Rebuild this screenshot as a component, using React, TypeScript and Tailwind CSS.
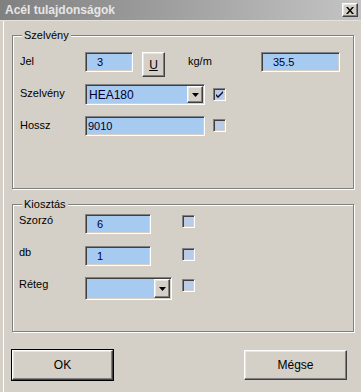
import type { JSX, ReactNode } from "react";

const sunken =
  "border border-t-[#808080] border-l-[#808080] border-b-white border-r-white shadow-[inset_1px_1px_0_#404040,inset_-1px_-1px_0_#d4d0c8]";
const raised =
  "border border-t-white border-l-white border-b-[#404040] border-r-[#404040] shadow-[inset_-1px_-1px_0_#808080,inset_1px_1px_0_#e8e6e0] bg-[#d4d0c8]";

function GroupBox({ title, className, children }: { title: string; className: string; children: ReactNode }): JSX.Element {
  return (
    <div className={`relative border border-[#808080] shadow-[inset_1px_1px_0_#fff,1px_1px_0_#fff] ${className}`}>
      <span className="absolute -top-[7px] left-[9px] bg-[#d4d0c8] px-[2px] leading-[13px]">{title}</span>
      {children}
    </div>
  );
}

function Field({ value, className }: { value?: string; className: string }): JSX.Element {
  return (
    <div className={`${sunken} bg-[#a6caf0] flex items-center pt-px text-[#000030] ${className}`}>
      {value}
    </div>
  );
}

function Combo({ value, className }: { value?: string; className: string }): JSX.Element {
  return (
    <div className={`${sunken} bg-[#a6caf0] flex items-stretch p-[1px] text-[#000030] ${className}`}>
      <span className="flex-1 flex items-center pl-[2px] pt-px text-[12px]">{value}</span>
      <span className={`${raised} w-[16px] flex items-center justify-center`}>
        <svg width="7" height="4" viewBox="0 0 7 4">
          <path d="M0 0h7L3.5 4z" fill="#000" />
        </svg>
      </span>
    </div>
  );
}

function Check({ checked, className }: { checked?: boolean; className: string }): JSX.Element {
  return (
    <div className={`${sunken} w-[13px] h-[13px] bg-[#b9cbe6] flex items-center justify-center ${className}`}>
      {checked && (
        <svg width="7" height="7" viewBox="0 0 7 7">
          <path d="M0 3l2 2 5-5v2L2 7 0 5z" fill="#0a0a3a" />
        </svg>
      )}
    </div>
  );
}

export default function App(): JSX.Element {
  return (
    <div className="w-[361px] h-[392px] overflow-hidden bg-[#d4d0c8] text-[11px] text-black font-['Liberation_Sans',Arial,sans-serif] shadow-[inset_3px_0_0_#d4d0c8,inset_4px_0_0_#fff]">
      <div className="h-[21px] flex items-center justify-between pl-[5px] pr-[3px] bg-linear-to-r from-[#808080] to-[#c4c4c4] border-b border-[#e4e2dc]">
        <span className="font-bold text-[12px] text-[#e6e6e6]">Acél tulajdonságok</span>
        <span className={`${raised} w-[16px] h-[14px] flex items-center justify-center`}>
          <svg width="8" height="7" viewBox="0 0 8 7">
            <path d="M0 0h2l2 2.5L6 0h2L5 3.5 8 7H6L4 4.5 2 7H0l3-3.5z" fill="#000" />
          </svg>
        </span>
      </div>

      <div className="px-[12px] pt-[14px]">
        <GroupBox title="Szelvény" className="w-[342px] h-[154px] pt-[15px] pl-[7px]">
          <div className="flex h-[26px]">
            <span className="w-[65px] mt-[4px] leading-[13px]">Jel</span>
            <Field value="3" className="w-[48px] h-[20px] mt-[1px] pl-[11px]" />
            <button className={`${raised} ml-[9px] w-[23px] h-[25px] mt-[1px] text-[12px] underline`}>U</button>
            <span className="ml-[23px] w-[73px] mt-[4px] leading-[13px]">kg/m</span>
            <Field value="35.5" className="w-[79px] h-[20px] mt-[1px] pl-[11px]" />
          </div>
          <div className="flex h-[21px] mt-[7px]">
            <span className="w-[65px] mt-[3px] leading-[13px]">Szelvény</span>
            <Combo value="HEA180" className="w-[120px] h-[21px]" />
            <Check checked className="ml-[8px] mt-[4px]" />
          </div>
          <div className="flex h-[20px] mt-[11px]">
            <span className="w-[65px] mt-[3px] leading-[13px]">Hossz</span>
            <Field value="9010" className="w-[120px] h-[20px] pl-[2px]" />
            <Check className="ml-[8px] mt-[3px]" />
          </div>
        </GroupBox>

        <GroupBox title="Kiosztás" className="mt-[15px] w-[342px] h-[128px] pt-[9px] pl-[6px]">
          <div className="flex h-[20px]">
            <span className="w-[66px] leading-[13px]">Szorzó</span>
            <Field value="6" className="w-[66px] h-[20px] pl-[11px]" />
            <Check className="ml-[31px] mt-[1px]" />
          </div>
          <div className="flex h-[20px] mt-[12px]">
            <span className="w-[66px] leading-[13px]">db</span>
            <Field value="1" className="w-[66px] h-[20px] pl-[11px]" />
            <Check className="ml-[31px] mt-[2px]" />
          </div>
          <div className="flex h-[23px] mt-[11px]">
            <span className="w-[66px] mt-[1px] leading-[13px]">Réteg</span>
            <Combo className="w-[87px] h-[23px]" />
            <Check className="ml-[10px] mt-[2px]" />
          </div>
        </GroupBox>

        <div className="flex justify-between mt-[17px]">
          <div className="-ml-[1px] border border-black">
            <button className={`${raised} w-[101px] h-[30px] text-[12px]`}>OK</button>
          </div>
          <button className={`${raised} mr-[2px] mt-[1px] w-[103px] h-[30px] text-[12px]`}>Mégse</button>
        </div>
      </div>
    </div>
  );
}
